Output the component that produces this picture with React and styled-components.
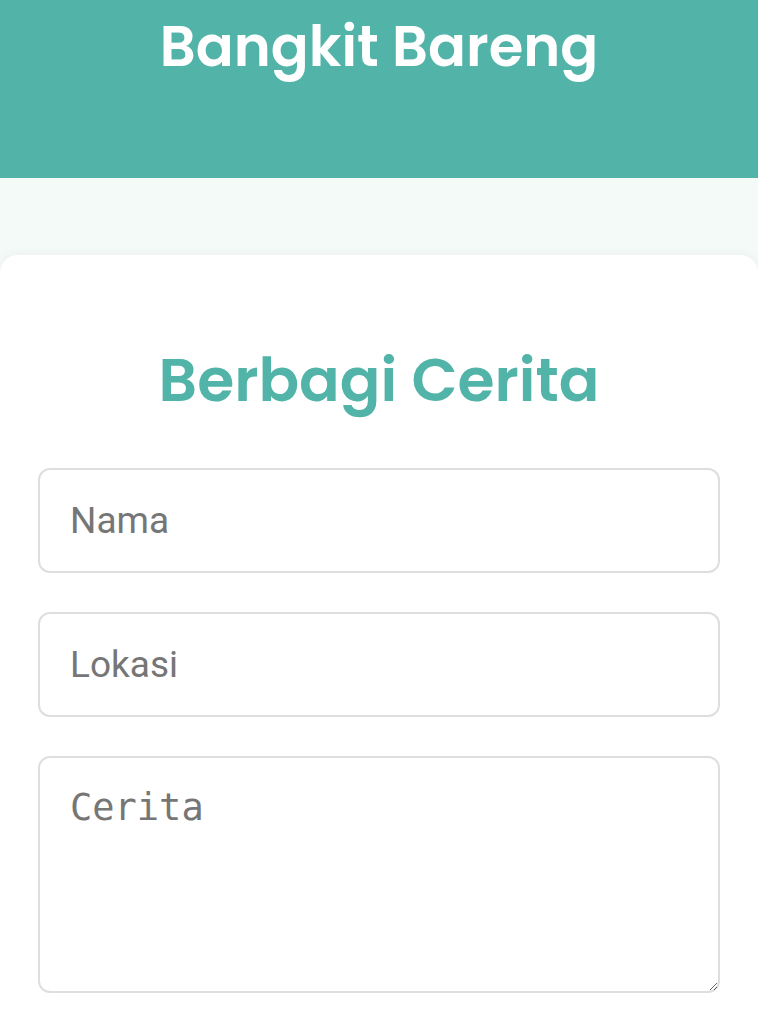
import React from "react";
import styled, { createGlobalStyle } from "styled-components";

const GlobalStyle = createGlobalStyle`
  body {
    margin: 0;
    background: #f3faf8;
    font-family: "Inter", "Noto Sans", sans-serif;
  }
  * {
    box-sizing: border-box;
  }
`;

const Page = styled.div`
  display: flex;
  flex-direction: column;
  min-height: 1024px;
`;

const Header = styled.header`
  background: #52b4a9;
  height: 178px;
  display: flex;
  justify-content: center;
  padding-top: 12px;
`;

const Brand = styled.h1`
  margin: 0;
  color: #ffffff;
  font-family: "Poppins", "Inter", sans-serif;
  font-weight: 600;
  font-size: 56px;
  line-height: 70px;
`;

const Card = styled.main`
  margin-top: 77px;
  background: #ffffff;
  border-radius: 18px 18px 0 0;
  box-shadow: 0 -2px 10px rgba(0, 0, 0, 0.04);
  padding: 90px 38px 30px;
  flex: 1;
`;

const Title = styled.h2`
  margin: 0 0 53px;
  text-align: center;
  color: #52b4a9;
  font-family: "Poppins", "Inter", sans-serif;
  font-weight: 600;
  font-size: 60px;
  line-height: 70px;
`;

const Form = styled.form`
  display: flex;
  flex-direction: column;
  gap: 39px;
`;

const Field = styled.input`
  height: 105px;
  border: 2px solid #dedede;
  border-radius: 12px;
  padding: 0 30px;
  font-family: "Roboto", sans-serif;
  font-size: 37px;
  color: #333;
  outline: none;
  &::placeholder {
    color: #767676;
  }
`;

const Story = styled.textarea`
  height: 237px;
  border: 2px solid #dedede;
  border-radius: 12px;
  padding: 28px 30px;
  font-family: "DejaVu Sans Mono", monospace;
  font-size: 37px;
  color: #333;
  outline: none;
  &::placeholder {
    color: #767676;
  }
`;

export default function App() {
  return (
    <>
      <GlobalStyle />
      <Page>
        <Header>
          <Brand>Bangkit Bareng</Brand>
        </Header>
        <Card>
          <Title>Berbagi Cerita</Title>
          <Form onSubmit={(e) => e.preventDefault()}>
            <Field type="text" placeholder="Nama" />
            <Field type="text" placeholder="Lokasi" />
            <Story placeholder="Cerita" />
          </Form>
        </Card>
      </Page>
    </>
  );
}
